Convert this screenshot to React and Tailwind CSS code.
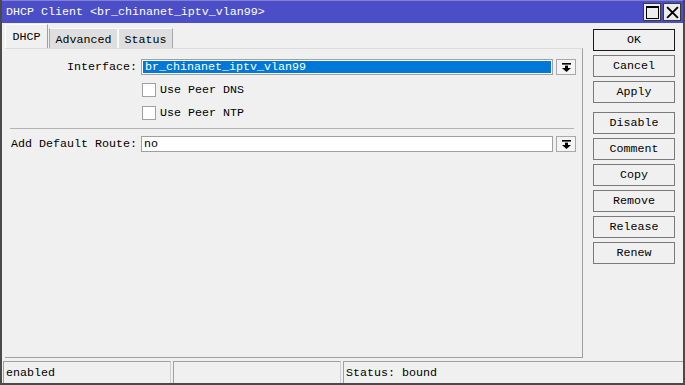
import React from "react";

const mono = { fontFamily: '"Liberation Mono", "DejaVu Sans Mono", monospace' };

function DropBtn() {
  return (
    <div className="ml-[3px] w-[20px] h-[16px] border border-[#a8a8a8] bg-[#f4f4f4] flex items-center justify-center">
      <svg width="9" height="9" viewBox="0 0 9 9">
        <rect x="0" y="0" width="9" height="1.6" fill="#000" />
        <rect x="3" y="2.6" width="3" height="2.6" fill="#000" />
        <polygon points="0,5 9,5 4.5,9" fill="#000" />
      </svg>
    </div>
  );
}

function Check({ label, className }) {
  return (
    <div className={"flex items-center h-[14px] " + className}>
      <div className="ml-[137px] w-[14px] h-[14px] border border-[#a0a0a0] bg-white" />
      <span className="ml-[4px] leading-[14px]">{label}</span>
    </div>
  );
}

function Btn({ children, def, className = "" }) {
  return (
    <div
      className={
        "h-[22px] w-[82px] flex items-center justify-center bg-[#f0f0f0] border " +
        (def ? "border-[#1a1a1a] " : "border-[#7a7a7a] ") +
        className
      }
    >
      {children}
    </div>
  );
}

export default function App() {
  return (
    <div
      style={mono}
      className="w-[685px] h-[385px] flex flex-col bg-[#f0f0f0] border-l-2 border-r-2 border-b-2 border-[#4a4a4a] text-[11.67px] leading-[16px] text-black overflow-hidden"
    >
      {/* Title bar */}
      <div className="h-[23px] shrink-0 bg-[#4b4ec7] border-t border-[#7f82d6] flex items-center justify-between pl-[4px] pr-[2px]">
        <span className="text-white">DHCP Client &lt;br_chinanet_iptv_vlan99&gt;</span>
        <div className="flex gap-[2px]">
          <div className="w-[18px] h-[18px] bg-[#ececec] border border-[#3a3a3a] flex items-center justify-center">
            <div className="w-[13px] h-[13px] border border-black border-t-2" />
          </div>
          <div className="w-[18px] h-[18px] bg-[#ececec] border border-[#3a3a3a] flex items-center justify-center">
            <svg width="13" height="13" viewBox="0 0 12 12">
              <path d="M1 1 L11 11 M11 1 L1 11" stroke="#000" strokeWidth="1.8" />
            </svg>
          </div>
        </div>
      </div>

      {/* Body */}
      <div className="flex-1 flex">
        <div className="ml-[3px] w-[578px] flex flex-col">
          {/* Tabs */}
          <div className="h-[25px] shrink-0 flex items-end">
            <div className="h-[24px] w-[43px] flex items-center justify-center bg-[#f0f0f0] border-l border-t border-r border-l-white border-t-white border-r-[#a0a0a0] pt-[1px]">
              DHCP
            </div>
            <div className="h-[20px] w-[69px] ml-[1px] flex items-center justify-center bg-[#dedede] border-l border-t border-r border-l-[#a8a8a8] border-t-[#f8f8f8] border-r-[#f8f8f8] pt-[2px]">
              Advanced
            </div>
            <div className="h-[20px] w-[55px] flex items-center justify-center bg-[#dedede] border-l border-t border-r border-l-[#f8f8f8] border-t-[#f8f8f8] border-r-[#a8a8a8] pt-[2px]">
              Status
            </div>
          </div>
          {/* Panel */}
          <div className="flex-1 mb-[3px] border-t border-r border-b border-t-[#dcdcdc] border-r-[#a0a0a0] border-b-[#a0a0a0] flex flex-col">
            <div className="mt-[10px] flex items-center h-[16px]">
              <div className="w-[132px] text-right">Interface:</div>
              <div className="ml-[4px] w-[412px] h-[16px] border border-[#a0a0a0] bg-white p-px">
                <div className="h-full bg-[#0078d7] text-white pl-[2px] leading-[13px]">br_chinanet_iptv_vlan99</div>
              </div>
              <DropBtn />
            </div>
            <Check label="Use Peer DNS" className="mt-[8px]" />
            <Check label="Use Peer NTP" className="mt-[9px]" />
            <div className="mt-[8px] ml-[5px] w-[564px] h-px bg-[#b4b4b4]" />
            <div className="mt-[7px] flex items-center h-[16px]">
              <div className="w-[132px] text-right">Add Default Route:</div>
              <div className="ml-[4px] w-[412px] h-[16px] border border-[#a0a0a0] bg-white pl-[2px] leading-[14px]">no</div>
              <DropBtn />
            </div>
          </div>
        </div>

        {/* Buttons */}
        <div className="ml-[10px] pt-[6px] flex flex-col">
          <Btn def>OK</Btn>
          <Btn className="mt-[4px]">Cancel</Btn>
          <Btn className="mt-[4px]">Apply</Btn>
          <Btn className="mt-[9px]">Disable</Btn>
          <Btn className="mt-[4px]">Comment</Btn>
          <Btn className="mt-[4px]">Copy</Btn>
          <Btn className="mt-[4px]">Remove</Btn>
          <Btn className="mt-[4px]">Release</Btn>
          <Btn className="mt-[4px]">Renew</Btn>
        </div>
      </div>

      {/* Status bar */}
      <div className="h-[22px] shrink-0 flex">
        <div className="ml-[1px] w-[168px] border-t border-l border-r border-t-[#a0a0a0] border-l-[#a0a0a0] border-r-[#cfcfcf] flex items-center pl-[2px]">
          enabled
        </div>
        <div className="ml-[2px] w-[168px] border-t border-l border-r border-t-[#a0a0a0] border-l-[#a0a0a0] border-r-[#cfcfcf]" />
        <div className="ml-[2px] flex-1 border-t border-l border-t-[#a0a0a0] border-l-[#a0a0a0] flex items-center pl-[2px]">
          Status: bound
        </div>
      </div>
    </div>
  );
}
